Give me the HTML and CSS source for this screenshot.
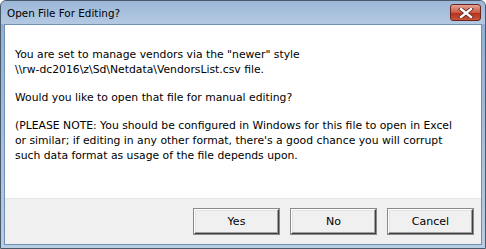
FILE: index.html
```html
<!DOCTYPE html>
<html lang="en">

<head>
    <meta charset="UTF-8">
    <title>Open File For Editing?</title>
    <link rel="stylesheet" href="styles.css">
</head>

<body>
    <div class="window">
        <div class="titlebar">
            <span class="title">Open File For Editing?</span>
            <span class="close">
                <svg width="16" height="10" viewBox="0 0 16 10">
                    <path d="M3 1 L13 9 M13 1 L3 9" stroke="#5a1f1a" stroke-width="4" stroke-linecap="square"/>
                    <path d="M3 1 L13 9 M13 1 L3 9" stroke="#fff" stroke-width="2.4" stroke-linecap="square"/>
                </svg>
            </span>
        </div>
        <div class="frame">
            <div class="content">
                <p>You are set to manage vendors via the "newer" style<br>\\rw-dc2016\z\Sd\Netdata\VendorsList.csv file.</p>
                <p>Would you like to open that file for manual editing?</p>
                <p>(PLEASE NOTE: You should be configured in Windows for this file to open in Excel<br>or similar; if editing in any other format, there's a good chance you will corrupt<br>such data format as usage of the file depends upon.</p>
            </div>
            <div class="buttons">
                <button>Yes</button>
                <button>No</button>
                <button>Cancel</button>
            </div>
        </div>
    </div>
</body>
</html>
```

FILE: styles.css
```css
body {
    margin: 0;
    padding: 0;
    font-family: "DejaVu Sans", Tahoma, sans-serif;
    background: #fff;
}

.window {
    width: 486px;
    height: 249px;
    box-sizing: border-box;
    background: linear-gradient(#8eaed0, #b9cde3);
    border: 1px solid #4a5a6c;
    border-radius: 6px 6px 0 0;
    display: flex;
    flex-direction: column;
}

.titlebar {
    height: 23px;
    display: flex;
    align-items: center;
    justify-content: space-between;
    padding: 0 4px 0 6px;
    background: linear-gradient(#9bb7d6, #b3c9e2);
    border-radius: 5px 5px 0 0;
}

.title {
    font-size: 10.4px;
    color: #000;
    padding-top: 1px;
}

.close {
    width: 31px;
    height: 17px;
    box-sizing: border-box;
    border: 1px solid #6b2620;
    border-radius: 3px;
    background: linear-gradient(#e2a393, #cc5a44 50%, #b6321e 55%, #c8543c);
    display: flex;
    align-items: center;
    justify-content: center;
}

.frame {
    flex: 1;
    margin: 0 3px 3px 3px;
    border: 1px solid #6e8fb3;
    display: flex;
    flex-direction: column;
    background: #f0f0f0;
}

.content {
    background: #fff;
    padding: 22px 10px 0 10px;
    height: 151px;
    font-size: 10.8px;
    line-height: 15px;
}

.content p {
    margin: 0 0 13px 0;
}

.buttons {
    flex: 1;
    display: flex;
    justify-content: flex-end;
    align-items: center;
    gap: 12px;
    padding-right: 8px;
    border-top: 1px solid #e6e6e6;
}

button {
    width: 85px;
    height: 25px;
    font-family: "DejaVu Sans", Tahoma, sans-serif;
    font-size: 11px;
    color: #000;
    background: #f0f0f0;
    border: 1px solid;
    border-color: #fff #404040 #404040 #fff;
    box-shadow: inset -1px -1px 0 #a0a0a0, inset 1px 1px 0 #e3e3e3, 0 0 0 1px #8a8a8a;
}
```
